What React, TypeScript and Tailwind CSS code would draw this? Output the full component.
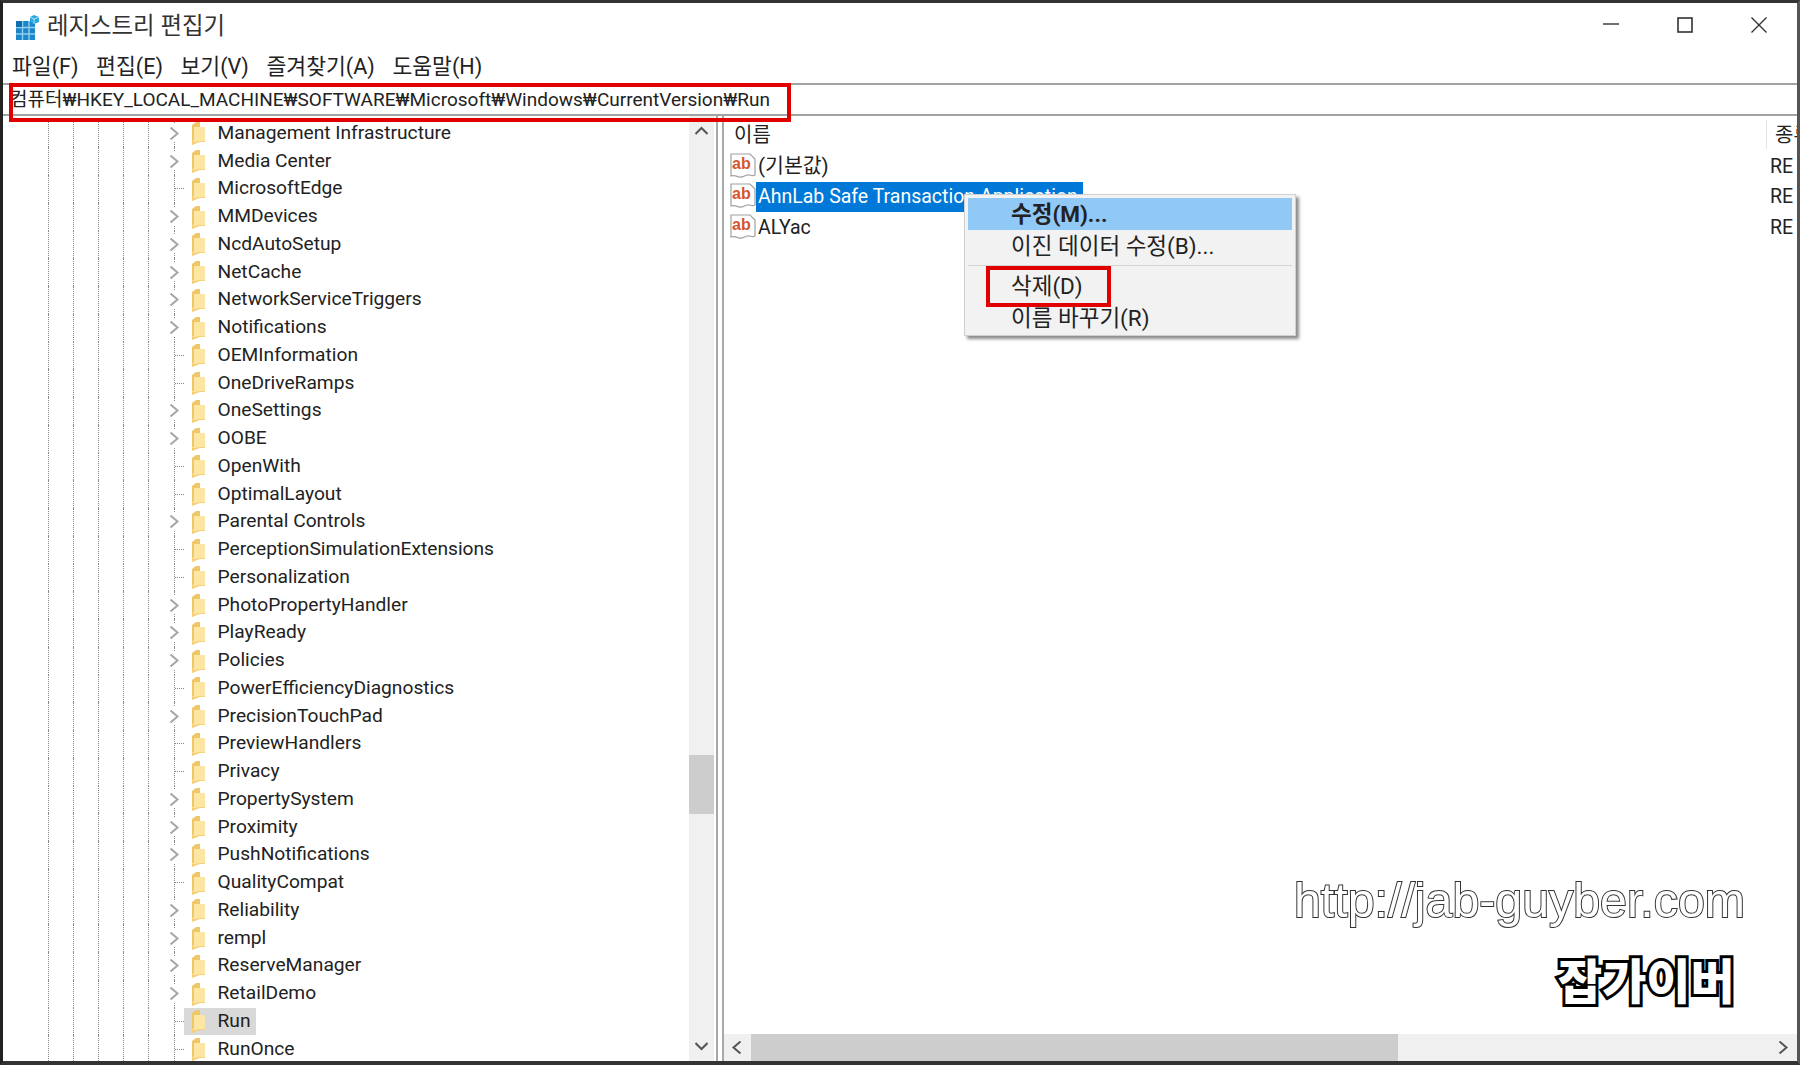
const treeItems: [string, boolean][] = [
  ["Management Infrastructure", true],
  ["Media Center", true],
  ["MicrosoftEdge", false],
  ["MMDevices", true],
  ["NcdAutoSetup", true],
  ["NetCache", true],
  ["NetworkServiceTriggers", true],
  ["Notifications", true],
  ["OEMInformation", false],
  ["OneDriveRamps", false],
  ["OneSettings", true],
  ["OOBE", true],
  ["OpenWith", false],
  ["OptimalLayout", false],
  ["Parental Controls", true],
  ["PerceptionSimulationExtensions", false],
  ["Personalization", false],
  ["PhotoPropertyHandler", true],
  ["PlayReady", true],
  ["Policies", true],
  ["PowerEfficiencyDiagnostics", false],
  ["PrecisionTouchPad", true],
  ["PreviewHandlers", false],
  ["Privacy", false],
  ["PropertySystem", true],
  ["Proximity", true],
  ["PushNotifications", true],
  ["QualityCompat", false],
  ["Reliability", true],
  ["rempl", true],
  ["ReserveManager", true],
  ["RetailDemo", true],
  ["Run", false],
  ["RunOnce", false],
];

const menus = ["파일(F)", "편집(E)", "보기(V)", "즐겨찾기(A)", "도움말(H)"];

function AppIcon() {
  return (
    <svg width="25" height="26" viewBox="0 0 25 26" className="shrink-0">
      <rect x="1" y="7" width="19" height="19" fill="#1d86c8" />
      <path d="M7.5 7v19M14 7v19M1 13.5h19M1 20h19" stroke="#8fd0ef" strokeWidth="1.4" />
      <rect x="1" y="7" width="6" height="6" fill="#0f6fae" />
      <path d="M19 1l5 2v5l-5 2-4-2V3z" fill="#2aa7dc" />
      <path d="M15 3l4 2 5-2M19 5v5" stroke="#d7f0fb" strokeWidth="0.8" fill="none" />
    </svg>
  );
}

function Folder() {
  return (
    <svg width="16" height="26" viewBox="0 0 16 26" className="shrink-0">
      <path d="M2 5l4-3h4v19l-8 4z" fill="#f0c768" />
      <path d="M4 7h11v15H2l2-2z" fill="#fce6a2" />
      <path d="M2 25l8-3h5v-1H8l-6 2z" fill="#f6d27c" />
    </svg>
  );
}

function Chevron({ dir = "right", className = "" }: { dir?: "right" | "left" | "up" | "down"; className?: string }) {
  const d = {
    right: "M2.5 0.5l7 6-7 6",
    left: "M9.5 0.5l-7 6 7 6",
    up: "M0.5 9l6-6 6 6",
    down: "M0.5 3l6 6 6-6",
  }[dir];
  return (
    <svg width="13" height="13" viewBox="0 0 13 13" fill="none" stroke="currentColor" strokeWidth="2" className={className}>
      <path d={d} />
    </svg>
  );
}

function AbIcon() {
  return (
    <svg width="26" height="27" viewBox="0 0 26 27" className="shrink-0">
      <path d="M1 1h19l5 5v16c-3 2-5-1-8 0s-5 3-8 2-5-2-8-1z" fill="#fff" stroke="#a0a0a0" strokeWidth="1.2" />
      <text x="2" y="16" fontSize="16" fontWeight="700" fontFamily="'Liberation Sans', sans-serif" fill="#d2552f">
        ab
      </text>
    </svg>
  );
}

function TreeRow({ name, expandable }: { name: string; expandable: boolean }) {
  const selected = name === "Run";
  return (
    <div className="flex h-[27.75px] items-center pl-[45px]">
      <span className="h-full w-[25px] border-l border-dotted border-[#8a8a8a]" />
      <span className="h-full w-[25px] border-l border-dotted border-[#8a8a8a]" />
      <span className="h-full w-[25px] border-l border-dotted border-[#8a8a8a]" />
      <span className="h-full w-[25px] border-l border-dotted border-[#8a8a8a]" />
      <span className="h-full w-[26px] border-l border-dotted border-[#8a8a8a]" />
      <span className="flex h-full w-[10px] items-center border-l border-dotted border-[#8a8a8a]">
        {expandable ? (
          <span className="-ml-[8px] flex h-[18px] w-[15px] items-center justify-center bg-white text-[#a6a6a6]">
            <Chevron />
          </span>
        ) : (
          <span className="h-0 w-[9px] border-t border-dotted border-[#8a8a8a]" />
        )}
      </span>
      <span className={`flex h-[27px] items-center ${selected ? "bg-[#d9d9d9]" : ""} pl-[6px] pr-[5px]`}>
        <Folder />
        <span className="ml-[11.5px] whitespace-nowrap text-[19.2px] text-[#222]">{name}</span>
      </span>
    </div>
  );
}

function ValueRow({ name, selected, korean }: { name: string; selected?: boolean; korean?: boolean }) {
  return (
    <div className="flex h-[30.5px] items-center pl-[6px]">
      <AbIcon />
      <span
        className={`flex h-[30.5px] items-center whitespace-nowrap pl-[2px] ${korean ? "text-[20.5px]" : "text-[19.5px]"} ${
          selected ? "w-[327px] bg-[#0078d7] text-white" : "text-[#222]"
        }`}
      >
        {name}
      </span>
      <span className="ml-auto w-[27px] text-[19.5px] text-[#222]">RE</span>
    </div>
  );
}

export default function App() {
  return (
    <div
      className="relative h-[1065px] w-[1800px] overflow-hidden bg-white text-[#222]"
      style={{ fontFamily: "Roboto, 'Noto Sans CJK KR', sans-serif" }}
    >
      <div className="flex h-full flex-col border-t-[3px] border-r-[3px] border-b-[4px] border-l-[3px] border-t-[#333] border-r-[#555] border-b-[#333] border-l-[#222]">
        {/* title bar */}
        <div className="flex h-[48px] items-center pl-[12px]">
          <AppIcon />
          <span className="ml-[7px] text-[23.4px] text-[#333]">레지스트리 편집기</span>
          <div className="ml-auto flex -translate-y-[2px] items-center gap-[58px] pr-[30px] text-[#333]">
            <svg width="16" height="16" viewBox="0 0 16 16" stroke="currentColor" strokeWidth="1.4">
              <path d="M0 7h16" />
            </svg>
            <svg width="16" height="16" viewBox="0 0 16 16" fill="none" stroke="currentColor" strokeWidth="1.6">
              <rect x="1" y="1" width="14" height="14" />
            </svg>
            <svg width="16" height="16" viewBox="0 0 16 16" stroke="currentColor" strokeWidth="1.4">
              <path d="M0.5 0.5l15 15M15.5 0.5l-15 15" />
            </svg>
          </div>
        </div>
        {/* menu */}
        <div className="flex h-[32px] items-center gap-[17.5px] pl-[9px] text-[21.6px]">
          {menus.map((m) => (
            <span key={m} className="whitespace-nowrap">
              {m}
            </span>
          ))}
        </div>
        {/* address */}
        <div className="flex h-[33px] items-center border-y-2 border-[#a3a3a3] pt-[1px] pl-[7px] text-[19px] whitespace-nowrap">
          컴퓨터₩HKEY_LOCAL_MACHINE₩SOFTWARE₩Microsoft₩Windows₩CurrentVersion₩Run
        </div>
        <div className="flex min-h-0 flex-1">
          {/* tree */}
          <div className="flex w-[711px] shrink-0">
            <div className="min-w-0 flex-1 overflow-hidden pt-[3.5px]">
              {treeItems.map(([name, expandable]) => (
                <TreeRow key={name} name={name} expandable={expandable} />
              ))}
            </div>
            <div className="flex w-[25px] shrink-0 flex-col items-center bg-[#f0f0f0] text-[#555]">
              <Chevron dir="up" className="mt-[9px]" />
              <div className="mt-[617px] h-[59px] w-full bg-[#cdcdcd]" />
              <Chevron dir="down" className="mt-auto mb-[8px]" />
            </div>
          </div>
          {/* splitter */}
          <div className="ml-[2px] w-[8px] shrink-0 border-x-2 border-[#a8a8a8] bg-white" />
          {/* values */}
          <div className="flex min-w-0 flex-1 flex-col">
            <div className="flex h-[33px] items-center pt-[4px] pl-[10px] text-[20px]">
              <span>이름</span>
              <span className="ml-auto flex h-full w-[31px] items-center border-l border-[#e5e5e5] pl-[8px]">
                <span className="w-[22px] overflow-hidden whitespace-nowrap">종류</span>
              </span>
            </div>
            <div className="flex-1 overflow-hidden pt-[2px]">
              <ValueRow name="(기본값)" korean />
              <ValueRow name="AhnLab Safe Transaction Application" selected />
              <ValueRow name="ALYac" />
            </div>
            <div className="flex h-[27px] items-center bg-[#f0f0f0] text-[#555]">
              <div className="flex w-[27px] justify-center">
                <Chevron dir="left" />
              </div>
              <div className="h-full w-[647px] bg-[#cdcdcd]" />
              <div className="ml-auto flex w-[27px] justify-center">
                <Chevron dir="right" />
              </div>
            </div>
          </div>
        </div>
      </div>

      {/* context menu */}
      <div className="absolute top-[194px] left-[964px] w-[332px] border border-[#d0d0d0] bg-[#f2f2f2] p-[3px] text-[22.5px] shadow-[3px_3px_3px_rgba(0,0,0,0.45)]">
        <div className="flex h-[32px] items-center bg-[#90c8f6] pt-[2px] pl-[43px] font-bold">수정(M)...</div>
        <div className="flex h-[32px] items-center pt-[2px] pl-[43px]">이진 데이터 수정(B)...</div>
        <div className="my-[3px] h-px bg-[#d4d4d4]" />
        <div className="flex h-[35px] items-center pl-[43px]">삭제(D)</div>
        <div className="flex h-[28px] items-center pt-[2px] pl-[43px]">이름 바꾸기(R)</div>
      </div>

      {/* red highlights */}
      <div className="absolute top-[83px] left-[9px] h-[39px] w-[782px] border-4 border-[#e00000]" />
      <div className="absolute top-[266px] left-[986px] h-[41px] w-[125px] border-4 border-[#e00000]" />

      {/* watermark */}
      <div
        className="absolute top-[870px] left-[1294px] text-[48.3px] leading-[60px] whitespace-nowrap text-white [-webkit-text-stroke:2px_#333] [paint-order:stroke_fill]"
        style={{ fontFamily: "'Liberation Sans', sans-serif" }}
      >
        http://jab-guyber.com
      </div>
      <div className="absolute top-[949px] left-[1558px] text-[48px] leading-[68px] font-black whitespace-nowrap text-white [-webkit-text-stroke:6px_#000] [paint-order:stroke_fill]">
        잡가이버
      </div>
    </div>
  );
}
